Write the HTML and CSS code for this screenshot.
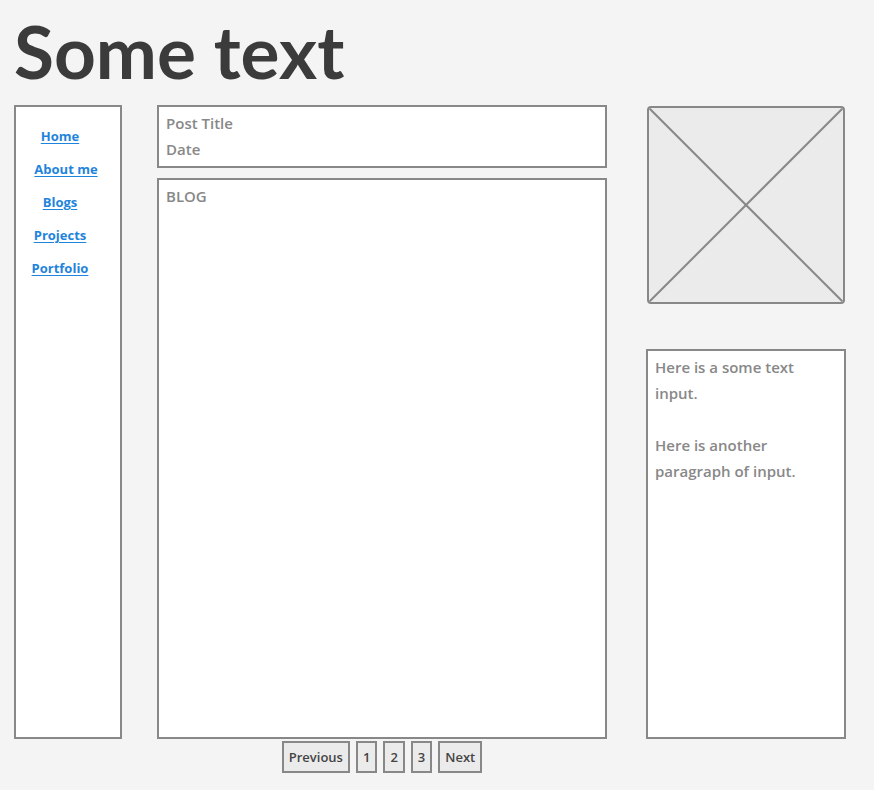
FILE: index.html
```html
<!DOCTYPE html>
<html lang="en">
<head>
<meta charset="utf-8">
<title>Some text</title>
<link rel="stylesheet" href="styles.css">
</head>
<body>
<h1 class="title">Some text</h1>
<div class="layout">
  <nav class="nav">
    <a href="#" class="nav-link">Home</a>
    <a href="#" class="nav-link nav-link-wide">About me</a>
    <a href="#" class="nav-link">Blogs</a>
    <a href="#" class="nav-link">Projects</a>
    <a href="#" class="nav-link">Portfolio</a>
  </nav>
  <div class="center">
    <div class="post-head box">
      <div class="line">Post Title</div>
      <div class="line">Date</div>
    </div>
    <div class="blog box">
      <div class="line">BLOG</div>
    </div>
    <div class="pager">
      <button class="page-btn">Previous</button>
      <button class="page-btn num">1</button>
      <button class="page-btn num">2</button>
      <button class="page-btn num">3</button>
      <button class="page-btn">Next</button>
    </div>
  </div>
  <aside class="side">
    <div class="picture">
      <svg class="cross" viewBox="0 0 100 100" preserveAspectRatio="none">
        <line x1="0" y1="0" x2="100" y2="100" vector-effect="non-scaling-stroke"/>
        <line x1="100" y1="0" x2="0" y2="100" vector-effect="non-scaling-stroke"/>
      </svg>
    </div>
    <div class="notes box">
      <p class="para">Here is a some text input.</p>
      <p class="para">Here is another paragraph of input.</p>
    </div>
  </aside>
</div>
</body>
</html>
```

FILE: styles.css
```css
* { box-sizing: border-box; }

html, body {
  margin: 0;
  padding: 0;
  background: #f4f4f4;
  font-family: "Open Sans", "Noto Sans", sans-serif;
}

body {
  width: 874px;
  height: 790px;
  overflow: hidden;
}

.title {
  margin: 0;
  padding: 6px 0 0 14px;
  height: 105px;
  font-family: Lato, "Open Sans", sans-serif;
  font-size: 73px;
  line-height: 90px;
  font-weight: 700;
  color: #3b3b3b;
  letter-spacing: 0;
}

.layout {
  display: grid;
  grid-template-columns: 108px 450px 204px;
  column-gap: 35px;
  margin-left: 14px;
}

.layout > .side { margin-left: 4px; }

.box {
  background: #fff;
  border: 2px solid #888;
}

.nav {
  height: 634px;
  background: #fff;
  border: 2px solid #888;
  display: flex;
  flex-direction: column;
  align-items: center;
  padding: 20px 16px 0 0;
  gap: 14px;
}

.nav-link {
  color: #1f84dc;
  font-weight: 700;
  font-size: 13px;
  line-height: 19px;
  text-decoration: underline;
  text-underline-offset: 2px;
}

.nav-link-wide { margin-left: 12px; }

.center {
  display: flex;
  flex-direction: column;
}

.line {
  color: #888;
  font-weight: 600;
  font-size: 15px;
  line-height: 26px;
}

.post-head {
  height: 63px;
  padding: 3px 7px;
}

.blog {
  margin-top: 10px;
  height: 561px;
  padding: 3px 7px;
}

.pager {
  display: flex;
  justify-content: center;
  gap: 6px;
  margin-top: 2px;
}

.page-btn {
  height: 32px;
  background: #ebebeb;
  border: 2px solid #888;
  font-family: inherit;
  font-weight: 600;
  font-size: 13px;
  color: #444;
  padding: 0 5px;
}

.page-btn.num { padding: 0 5px; min-width: 20px; }

.side {
  display: flex;
  flex-direction: column;
}

.picture {
  width: 198px;
  height: 198px;
  margin: 1px 0 0 1px;
  background: #ebebeb;
  border: 2px solid #888;
  border-radius: 4px;
  overflow: hidden;
}

.cross {
  display: block;
  width: 100%;
  height: 100%;
}

.cross line {
  stroke: #888;
  stroke-width: 2;
}

.notes {
  margin-top: 45px;
  height: 390px;
  padding: 3px 7px;
}

.para {
  margin: 0 0 26px;
  color: #888;
  font-weight: 600;
  font-size: 15px;
  line-height: 26px;
}
```
